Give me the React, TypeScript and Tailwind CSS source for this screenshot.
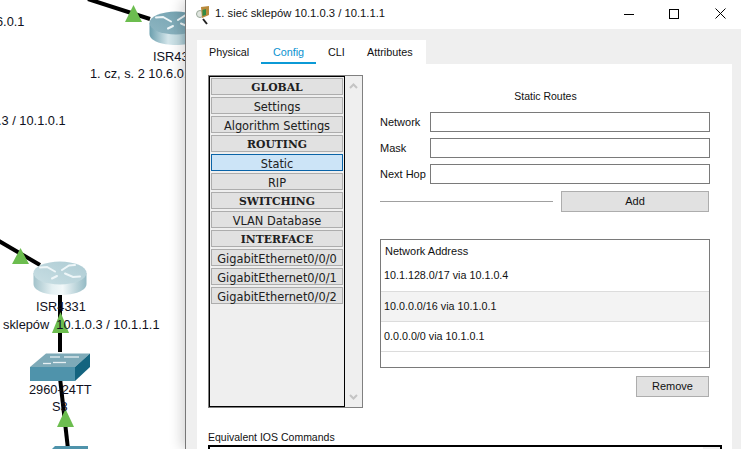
const SANS = "font-['Liberation_Sans',Arial,sans-serif]";

function Router({ idp, x, y, light }: { idp: string; x: number; y: number; light?: boolean }) {
  return (
    <svg className="absolute" style={{ left: x, top: y }} width="54" height="35" viewBox="0 0 54 35">
      <defs>
        <linearGradient id={idp} x1="0" x2="1" y1="0" y2="0">
          <stop offset="0" stopColor={light ? "#a3c3cb" : "#6b9fae"} />
          <stop offset="0.35" stopColor={light ? "#e4f0f2" : "#d3e5ea"} />
          <stop offset="0.55" stopColor={light ? "#f2f8f9" : "#c3dce2"} />
          <stop offset="1" stopColor={light ? "#94bac4" : "#4f8ba0"} />
        </linearGradient>
        <linearGradient id={`${idp}t`} x1="0" x2="1" y1="1" y2="0">
          <stop offset="0" stopColor={light ? "#c9dfe4" : "#8fb6c2"} />
          <stop offset="1" stopColor={light ? "#adcbd3" : "#6f9fae"} />
        </linearGradient>
      </defs>
      <path d="M0.5 12 V23 C0.5 29.5 12 34 27 34 C42 34 53.5 29.5 53.5 23 V12 Z" fill={`url(#${idp})`} />
      <ellipse cx="27" cy="12" rx="26.5" ry="11.5" fill={`url(#${idp}t)`} />
      <g stroke="#eef6f8" strokeWidth="2" strokeLinecap="round" fill="none">
        <path d="M7 6.5 L14 6 L22 10.5" />
        <path d="M29 9 L36 4.5 L42 4" />
        <path d="M32 12.5 L40 16 L47 15.5" />
        <path d="M19 17.5 L24 15" />
      </g>
    </svg>
  );
}

function Switch({ x, y }: { x: number; y: number }) {
  return (
    <svg className="absolute" style={{ left: x, top: y }} width="60" height="28" viewBox="0 0 60 28">
      <path d="M0 14 L16 0.5 L60 0.5 L45 14 Z" fill="#7eaab8" />
      <path d="M0 14 H45 V28 H0 Z" fill="#4f93ab" />
      <path d="M45 14 L60 0.5 V14 L45 28 Z" fill="#14647f" />
      <g stroke="#e6f0f3" strokeWidth="1.3" fill="none">
        <path d="M13 10.5 L21 10.5" />
        <path d="M23 9.5 H36" />
        <path d="M20 4 H30" />
        <path d="M34 4 H49" />
      </g>
    </svg>
  );
}

function Triangle({ x, y, w = 17, h = 16 }: { x: number; y: number; w?: number; h?: number }) {
  return (
    <svg className="absolute" style={{ left: x, top: y }} width={w} height={h} viewBox="0 0 17 16" preserveAspectRatio="none">
      <path d="M8.5 0 L17 16 H0 Z" fill="#6cbd4f" />
    </svg>
  );
}

function CanvasLabel({ x, y, children }: { x: number; y: number; children: React.ReactNode }) {
  return (
    <span className={`absolute whitespace-nowrap text-[12.8px] leading-[14px] text-[#101020] ${SANS}`} style={{ left: x, top: y }}>
      {children}
    </span>
  );
}

function Canvas() {
  return (
    <div className="absolute inset-0 overflow-hidden bg-white">
      <svg className="absolute left-0 top-0" width="200" height="449" viewBox="0 0 200 449">
        <g stroke="#000" strokeWidth="4" fill="none">
          <path d="M88 -1 L150 19" />
          <path d="M-1 241 L40 265" />
          <path d="M60 290 L60 352" />
          <path d="M60 378 L68 449" />
        </g>
      </svg>
      <Router idp="r1" x={149} y={11} />
      <Router idp="r2" x={33} y={261} light />
      <Switch x={30} y={353} />
      <svg className="absolute" style={{ left: 52, top: 446 }} width="36" height="3" viewBox="0 0 36 3">
        <path d="M3 0 H36 V3 H0 Z" fill="#4f93ab" />
      </svg>
      <Triangle x={125} y={5} h={17} />
      <Triangle x={12} y={248} />
      <Triangle x={52} y={312} h={21} />
      <Triangle x={57} y={409} h={18} />
      <CanvasLabel x={-4} y={15}>6.0.1</CanvasLabel>
      <CanvasLabel x={153} y={50}>ISR43</CanvasLabel>
      <CanvasLabel x={90} y={67}>1. cz, s. 2 10.6.0.1</CanvasLabel>
      <CanvasLabel x={-2} y={114}>.3 / 10.1.0.1</CanvasLabel>
      <CanvasLabel x={36} y={300}>ISR4331</CanvasLabel>
      <CanvasLabel x={3} y={318}>sklepów&nbsp; 10.1.0.3 / 10.1.1.1</CanvasLabel>
      <CanvasLabel x={29} y={383}>2960-24TT</CanvasLabel>
      <CanvasLabel x={52} y={400}>S3</CanvasLabel>
    </div>
  );
}

function MenuItem({ label, head, active }: { label: string; head?: boolean; active?: boolean }) {
  return (
    <div
      className={`flex h-[17px] items-center justify-center border whitespace-nowrap ${
        active
          ? "border-[#0a64a8] bg-[#cce4f7] text-[#202020]"
          : "border-[#adadad] bg-[#e1e1e1] text-[#202020]"
      } ${
        head
          ? "pt-[4px] font-['DejaVu_Serif',serif] text-[10.8px] font-bold text-[#101010]"
          : "pt-[4px] font-['DejaVu_Sans',sans-serif] text-[11.4px]"
      }`}
    >
      {label}
    </div>
  );
}

function Sidebar() {
  return (
    <div className="flex h-[333px] w-[155px] shrink-0 border border-[#808080] bg-[#efefef]">
      <div className="flex w-[136px] shrink-0 flex-col gap-[2px] border border-black px-[1px] pt-[1px]">
        <MenuItem label="GLOBAL" head />
        <MenuItem label="Settings" />
        <MenuItem label="Algorithm Settings" />
        <MenuItem label="ROUTING" head />
        <MenuItem label="Static" active />
        <MenuItem label="RIP" />
        <MenuItem label="SWITCHING" head />
        <MenuItem label="VLAN Database" />
        <MenuItem label="INTERFACE" head />
        <MenuItem label="GigabitEthernet0/0/0" />
        <MenuItem label="GigabitEthernet0/0/1" />
        <MenuItem label="GigabitEthernet0/0/2" />
      </div>
      <div className="flex flex-1 flex-col items-center justify-between px-[3px] py-[7px]">
        <svg width="9" height="6" viewBox="0 0 9 6"><path d="M1 5 L4.5 1.5 L8 5" fill="none" stroke="#c4c4c4" strokeWidth="2" /></svg>
        <svg width="9" height="6" viewBox="0 0 9 6"><path d="M1 1 L4.5 4.5 L8 1" fill="none" stroke="#c4c4c4" strokeWidth="2" /></svg>
      </div>
    </div>
  );
}

function Field({ label }: { label: string }) {
  return (
    <div className="flex h-[20px] items-center">
      <span className="w-[50px] shrink-0 text-[11px] text-[#111]">{label}</span>
      <div className="h-[20px] flex-1 border border-[#7a7a7a] bg-white" />
    </div>
  );
}

function Btn({ label, className }: { label: string; className: string }) {
  return (
    <div className={`flex h-[21px] items-center justify-center border border-[#adadad] bg-[#e1e1e1] text-[11px] text-[#111] ${className}`}>
      {label}
    </div>
  );
}

function Routes() {
  const rows = [
    { t: "10.1.128.0/17 via 10.1.0.4", bg: "", pb: "pb-[2px]" },
    { t: "10.0.0.0/16 via 10.1.0.1", bg: "bg-[#f3f3f3]", pb: "" },
    { t: "0.0.0.0/0 via 10.1.0.1", bg: "", pb: "" },
  ];
  return (
    <div className={`ml-[17px] flex w-[330px] flex-col pt-[10px] ${SANS}`}>
      <div className="mr-[1px] flex h-[20px] items-center justify-center pl-[2px] pt-[4px] text-[10.5px] text-[#111]">Static Routes</div>
      <div className="mt-[7px] flex flex-col gap-[6px]">
        <Field label="Network" />
        <Field label="Mask" />
        <Field label="Next Hop" />
      </div>
      <div className="mt-[7px] flex items-center gap-[8px]">
        <div className="h-[1px] w-[173px] bg-[#a0a0a0]" />
        <Btn label="Add" className="w-[148px]" />
      </div>
      <div className="mt-[27px] flex h-[129px] w-[330px] flex-col border border-[#7a7a7a] bg-white text-[10.75px] text-[#111]">
        <div className="flex h-[22px] items-center pl-[4px] pt-[1px] text-[11px]">Network Address</div>
        {rows.map((r) => (
          <div key={r.t} className={`flex h-[30px] items-center border-b border-[#dcdcdc] pl-[3px] ${r.bg} ${r.pb}`}>{r.t}</div>
        ))}
      </div>
      <Btn label="Remove" className="mt-[8px] ml-[256px] w-[73px]" />
    </div>
  );
}

function Dialog() {
  return (
    <div className={`absolute left-[185px] top-0 flex h-[449px] w-[556px] flex-col border-l border-[#777] bg-[#efefef] shadow-[-4px_0_12px_rgba(0,0,0,0.16)] ${SANS}`}>
      <div className="flex h-[29px] shrink-0 items-center bg-white pb-[2px] pl-[10px]">
        <svg width="16" height="22" viewBox="0 0 16 22">
          <circle cx="4" cy="11" r="3.5" fill="#dfe5df" stroke="#9aa89a" />
          <path d="M5 4 L13 3 L13 12 L6 15 Z" fill="#b98a3c" />
          <path d="M6.5 7 L10 6 L10 12 L6.5 13 Z" fill="#2f8a45" />
          <path d="M7 16 L11 21" stroke="#222" strokeWidth="2" />
        </svg>
        <span className="ml-[3px] text-[11.25px] text-[#111]">1. sieć sklepów 10.1.0.3 / 10.1.1.1</span>
        <div className="ml-auto flex items-center pr-[15px]">
          <svg width="10" height="10" viewBox="0 0 10 10"><path d="M0 5.5 H10" stroke="#000" /></svg>
          <svg className="ml-[35px]" width="10" height="10" viewBox="0 0 10 10"><rect x="0.5" y="0.5" width="9" height="9" fill="none" stroke="#000" /></svg>
          <svg className="ml-[36px]" width="11" height="11" viewBox="0 0 11 11"><path d="M0.5 0.5 L10.5 10.5 M10.5 0.5 L0.5 10.5" stroke="#000" /></svg>
        </div>
      </div>
      <div className="ml-[11px] mt-[11px] flex flex-1 flex-col overflow-hidden">
        <div className="flex h-[24px] w-[229px] shrink-0 items-start bg-white pl-[12px] pt-[5px] text-[10.8px] text-[#111]">
          <span className="w-[40px] leading-[14px]">Physical</span>
          <div className="ml-[12px] flex w-[55px] flex-col items-center">
            <span className="leading-[14px] text-[#0b93d0]">Config</span>
            <div className="mt-[3px] h-[4px] w-full bg-[#0b9ad6]" />
          </div>
          <span className="ml-[12px] w-[15px] leading-[14px]">CLI</span>
          <span className="ml-[24px] leading-[14px]">Attributes</span>
        </div>
        <div className="flex w-[535px] flex-1 flex-col bg-white pl-[11px] pt-[11px]">
          <div className="flex">
            <Sidebar />
            <Routes />
          </div>
          <div className="mt-[23px] text-[10.5px] leading-[12px] text-[#111]">Equivalent IOS Commands</div>
          <div className="mt-[2px] flex h-[20px] w-[514px] justify-end border-2 border-black bg-white">
            <div className="w-[17px] bg-[#f0f0f0]" />
          </div>
        </div>
      </div>
    </div>
  );
}

export default function App() {
  return (
    <div className="relative h-[449px] w-[741px] overflow-hidden bg-white">
      <Canvas />
      <Dialog />
    </div>
  );
}
